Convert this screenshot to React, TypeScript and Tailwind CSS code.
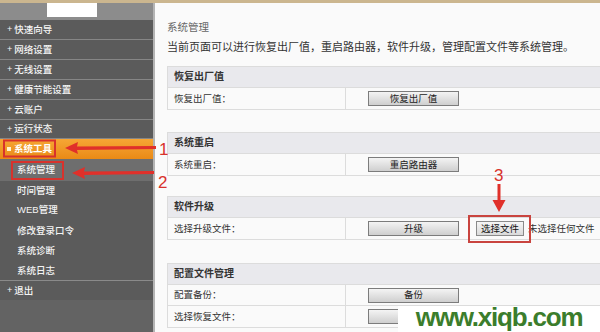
import React from "react";

const FONT = { fontFamily: '"Liberation Sans", "Noto Sans CJK SC", sans-serif' };

function MenuItem({ label, h = "h-[20px]" }: { label: string; h?: string }) {
  return (
    <div className={`${h} flex items-center border-b border-[#868686] pl-[7px] text-[9.5px] font-medium text-[#f4f4f4]`}>
      <span className="mr-[2px] text-[9px] leading-none">+</span>
      <span className="leading-none">{label}</span>
    </div>
  );
}

function SubItem({ label, active = false, h = "h-[20px]" }: { label: string; active?: boolean; h?: string }) {
  return (
    <div className={`${h} flex items-center pl-[17px] text-[9.5px] font-medium text-[#f4f4f4] ${active ? "bg-[#6e6e6e]" : ""}`}>
      <span className="leading-none">{label}</span>
    </div>
  );
}

function Btn({ label }: { label: string }) {
  return (
    <div className="ml-[22px] flex h-[15px] w-[91px] items-center justify-center whitespace-nowrap border border-[#7c7c7c] bg-gradient-to-b from-[#f4f4f4] to-[#cfcfcf] text-[9.5px] leading-none text-[#222]">
      {label}
    </div>
  );
}

function FileBtn() {
  return (
    <div className="ml-[17px] flex h-[15px] w-[48px] items-center justify-center whitespace-nowrap border border-[#8a8a8a] bg-gradient-to-b from-[#f6f6f6] to-[#dadada] text-[9.5px] leading-none text-[#111]">
      选择文件
    </div>
  );
}

function Row({ label, children, last = false }: { label: string; children: React.ReactNode; last?: boolean }) {
  return (
    <div className={`flex h-[21px] ${last ? "" : "border-b border-[#dcdcdc]"}`}>
      <div className="flex w-[178px] items-center border-r border-[#dcdcdc] pl-[6px] text-[9.5px] leading-none text-[#333]">{label}</div>
      <div className="flex flex-1 items-center">{children}</div>
    </div>
  );
}

function Section({ title, children, className = "" }: { title: string; children: React.ReactNode; className?: string }) {
  return (
    <div className={`w-[450px] shrink-0 border border-[#dcdcdc] bg-[#fafafa] ${className}`}>
      <div className="flex h-[21px] items-center border-b border-[#dcdcdc] bg-[#e9e9ed] pl-[6px] text-[10px] font-bold leading-none text-[#333]">
        {title}
      </div>
      {children}
    </div>
  );
}

export default function App() {
  return (
    <div className="relative flex h-[332px] w-[600px] flex-col overflow-hidden bg-[#fafafa]" style={FONT}>
      <div className="h-[3px] bg-[#cbb68f]" />
      <div className="flex flex-1 overflow-hidden">
        {/* sidebar */}
        <div className="flex w-[153px] shrink-0 flex-col bg-[#5b5b5b]">
          <div className="flex h-[17px] items-start bg-[#8c8c8c]">
            <div className="ml-[47px] h-[14px] w-[50px] bg-white" />
          </div>
          <MenuItem label="快速向导" />
          <MenuItem label="网络设置" />
          <MenuItem label="无线设置" />
          <MenuItem label="健康节能设置" />
          <MenuItem label="云账户" />
          <MenuItem label="运行状态" h="h-[19px]" />
          <div className="flex h-[20px] items-center bg-gradient-to-b from-[#f6a634] to-[#ea8a14] pl-[7px] text-[9.5px] font-bold text-white">
            <span className="mr-[3px] h-[4px] w-[4px] bg-[#fff4d0]" />
            <span className="leading-none">系统工具</span>
          </div>
          <SubItem label="系统管理" active h="h-[22px]" />
          <SubItem label="时间管理" h="h-[19px]" />
          <SubItem label="WEB管理" />
          <SubItem label="修改登录口令" h="h-[21px]" />
          <SubItem label="系统诊断" />
          <div className="flex h-[20px] items-center border-b border-[#8a8a8a] pl-[17px] text-[9.5px] font-medium text-[#f4f4f4]">
            <span className="leading-none">系统日志</span>
          </div>
          <div className="flex h-[19px] items-center pl-[7px] text-[9.5px] font-medium text-[#f4f4f4]">
            <span className="mr-[2px] text-[9px] leading-none">+</span>
            <span className="leading-none">退出</span>
          </div>
          <div className="flex-1 bg-[#636363]" />
        </div>
        <div className="w-[2px] shrink-0 bg-[#b4b4b4]" />
        {/* content */}
        <div className="flex flex-1 flex-col overflow-hidden bg-[#fafafa] pl-[12px] pt-[16px]">
          <div className="h-[16px] whitespace-nowrap text-[10.5px] leading-[16px] text-[#666]">系统管理</div>
          <div className="mt-[4px] h-[16px] whitespace-nowrap text-[11px] leading-[16px] text-[#333]">
            当前页面可以进行恢复出厂值，重启路由器，软件升级，管理配置文件等系统管理。
          </div>
          <Section title="恢复出厂值" className="mt-[11px]">
            <Row label="恢复出厂值：" last>
              <Btn label="恢复出厂值" />
            </Row>
          </Section>
          <Section title="系统重启" className="mt-[22px]">
            <Row label="系统重启：" last>
              <Btn label="重启路由器" />
            </Row>
          </Section>
          <Section title="软件升级" className="mt-[20px]">
            <Row label="选择升级文件：" last>
              <Btn label="升级" />
              <FileBtn />
              <span className="ml-[4px] whitespace-nowrap text-[9.5px] leading-none text-[#333]">未选择任何文件</span>
            </Row>
          </Section>
          <Section title="配置文件管理" className="mt-[23px]">
            <Row label="配置备份：">
              <Btn label="备份" />
            </Row>
            <Row label="选择恢复文件：" last>
              <Btn label="" />
              <FileBtn />
            </Row>
          </Section>
        </div>
      </div>

      {/* annotations overlay */}
      <svg className="pointer-events-none absolute left-0 top-0" width="600" height="332" viewBox="0 0 600 332">
        <rect x="4" y="140.5" width="51" height="16" fill="none" stroke="#d8322c" strokeWidth="2" />
        <rect x="12" y="162" width="51" height="17" fill="none" stroke="#d8322c" strokeWidth="2" />
        <rect x="469" y="216" width="61" height="26" fill="none" stroke="#c9443f" strokeWidth="2" />
        <polygon points="65,148 78,142 77,146.5 156,146 156,149 77,150 78,154" fill="#e0302a" />
        <polygon points="72,173 85,167 84,171.5 154,171 154,174 84,175 85,179" fill="#e0302a" />
        <polygon points="497.5,184 500.5,184 500.5,200 505.5,200 499,212 492.5,200 497.5,200" fill="#e0302a" />
        <text x="159" y="155" fontSize="17" fill="#d8322c" fontFamily="Liberation Sans, sans-serif">1</text>
        <text x="158" y="188" fontSize="17" fill="#d8322c" fontFamily="Liberation Sans, sans-serif">2</text>
        <text x="494" y="181" fontSize="17" fill="#d8322c" fontFamily="Liberation Sans, sans-serif">3</text>
      </svg>

      {/* watermark */}
      <div className="absolute bottom-0 left-[398px] flex h-[26px] w-[202px] items-end justify-center bg-white pb-[2px]">
        <span className="text-[26px] font-bold leading-none tracking-[-1.2px] text-[#3b7d2c]" style={{ fontFamily: '"Liberation Sans", sans-serif' }}>
          www.xiqb.com
        </span>
      </div>
    </div>
  );
}
